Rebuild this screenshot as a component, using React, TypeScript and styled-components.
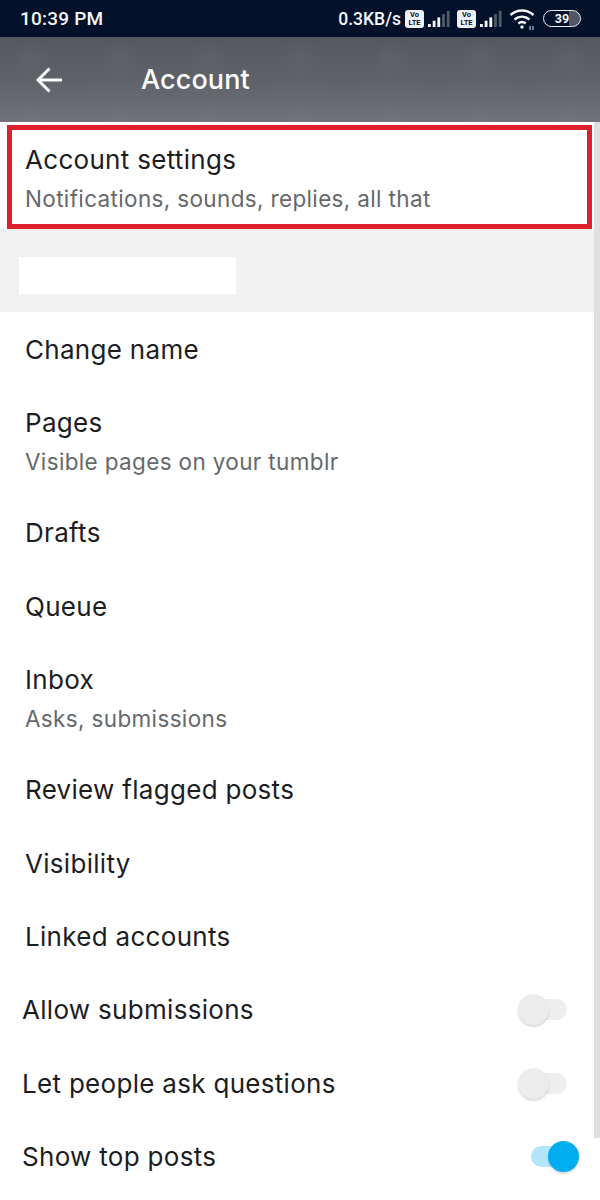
import React from "react";
import styled, { createGlobalStyle } from "styled-components";

const Global = createGlobalStyle`
  html, body { margin: 0; padding: 0; background: #fff; }
  body { font-family: Inter, "Liberation Sans", sans-serif; }
`;

const Page = styled.div`
  width: 600px;
  height: 1200px;
  overflow: hidden;
  position: relative;
  background: #fff;
`;

const StatusBar = styled.div`
  height: 37px;
  background: #03122a;
  color: #f4f6f8;
  display: flex;
  align-items: center;
  justify-content: space-between;
  padding: 0 19px 0 20px;
  font-family: Roboto, sans-serif;
  font-weight: 500;
`;

const Clock = styled.span`
  font-size: 19px;
  letter-spacing: 0.2px;
`;

const StatusRight = styled.div`
  display: flex;
  align-items: center;
`;

const Speed = styled.span`
  font-size: 17.5px;
  margin-right: 4px;
`;

const VolteBadge = styled.span`
  width: 19px;
  height: 18px;
  border-radius: 3px;
  background: #eef1f4;
  color: #03122a;
  font-size: 7.5px;
  line-height: 8px;
  font-weight: 700;
  text-align: center;
  display: flex;
  flex-direction: column;
  justify-content: center;
`;

const Header = styled.header`
  height: 85px;
  display: flex;
  align-items: center;
  color: #fff;
  background:
    radial-gradient(circle 20px at 30px 20px, rgba(255, 255, 255, 0.025), transparent),
    radial-gradient(circle 20px at 75px 48px, rgba(0, 0, 0, 0.02), transparent),
    linear-gradient(180deg, #55595f 0%, #5f6268 50%, #6f7379 100%);
  background-size: 90px 65px, 90px 65px, 100% 100%;
`;

const BackButton = styled.span`
  width: 26px;
  margin-left: 36px;
  display: flex;
`;

const Title = styled.h1`
  margin: 0 0 0 79px;
  font-size: 27px;
  font-weight: 500;
  letter-spacing: 0.1px;
`;

const Content = styled.div`
  padding-top: 3px;
`;

const Highlight = styled.section`
  margin: 0 8px 0 7px;
  height: 104px;
  box-sizing: border-box;
  border: 5px solid #de1f2c;
  padding: 12px 13px 0;
  background: #fff;
`;

const Label = styled.div`
  font-size: 26px;
  line-height: 36px;
  color: #1d1d1f;
  letter-spacing: 0.3px;
`;

const Sublabel = styled.div`
  font-size: 22.5px;
  line-height: 34px;
  margin-top: 4px;
  color: #66686b;
  letter-spacing: 0.35px;
`;

const SectionHead = styled.div`
  height: 83px;
  margin-right: 6px;
  background: #f1f1f1;
  padding: 28px 0 0 19px;
  box-sizing: border-box;
`;

const Redaction = styled.div`
  width: 217px;
  height: 37px;
  background: #fff;
`;

const Row = styled.div<{ $tall?: boolean; $inset?: number }>`
  height: ${(p) => (p.$tall ? 110 : 73.4)}px;
  box-sizing: border-box;
  padding: 20px 33px 0 ${(p) => p.$inset ?? 25}px;
  display: flex;
  justify-content: space-between;
  align-items: flex-start;
`;

const Track = styled.span<{ $on?: boolean }>`
  position: relative;
  display: block;
  width: 36px;
  height: 21px;
  margin-top: 7px;
  border-radius: 11px;
  background: ${(p) => (p.$on ? "#b3e6fb" : "#eeeeee")};
`;

const Knob = styled.span<{ $on?: boolean }>`
  position: absolute;
  top: -5px;
  ${(p) => (p.$on ? "right: -12px;" : "left: -13px;")}
  width: 31px;
  height: 31px;
  border-radius: 50%;
  background: ${(p) => (p.$on ? "#00aeef" : "#ececec")};
  box-shadow: 0 2px 2px rgba(0, 0, 0, 0.14);
`;

const Scrollbar = styled.div`
  position: absolute;
  right: 0;
  top: 122px;
  width: 6px;
  height: 1016px;
  background: #e0e0e0;
`;

const Signal = ({ gap }: { gap: number }) => (
  <svg width="24" height="20" viewBox="0 0 24 20" style={{ marginLeft: 3, marginRight: gap }}>
    {[0, 1, 2, 3, 4].map((i) => (
      <rect key={i} x={1 + i * 4.7} y={15 - i * 3.3} width="2.8" height={3 + i * 3.3} fill={i >= 3 ? "#4f5a6b" : "#f4f6f8"} />
    ))}
  </svg>
);

const Wifi = () => (
  <svg width="26" height="24" viewBox="0 0 26 24" fill="none" stroke="#f4f6f8" strokeWidth="2.4" style={{ marginRight: 8 }}>
    <path d="M1.500 8c6.800-6 16.200-6 23 0" />
    <path d="M5.500 12.500c4.400-3.800 10.600-3.800 15 0" />
    <path d="M9.300 16.500c2.200-1.700 5.200-1.700 7.400 0" />
    <circle cx="13" cy="20" r="1.7" fill="#f4f6f8" stroke="none" />
    <path d="M21 19v4M24 19v4" strokeWidth="1.300" stroke="#aab2bc" />
  </svg>
);

const BatteryShell = styled.span`
  position: relative;
  box-sizing: border-box;
  width: 38px;
  height: 17px;
  border: 1.5px solid #e9edf0;
  border-radius: 9px;
  display: flex;
  align-items: center;
  justify-content: center;
  font-size: 12.5px;
  font-weight: 700;
  background: linear-gradient(90deg, transparent 70%, #4e5868 70%);
`;

const items = [
  { label: "Change name" },
  { label: "Pages", sub: "Visible pages on your tumblr" },
  { label: "Drafts" },
  { label: "Queue" },
  { label: "Inbox", sub: "Asks, submissions" },
  { label: "Review flagged posts" },
  { label: "Visibility" },
  { label: "Linked accounts" },
];

const toggles = [
  { label: "Allow submissions", on: false },
  { label: "Let people ask questions", on: false },
  { label: "Show top posts", on: true },
];

export default function App() {
  return (
    <Page>
      <Global />
      <StatusBar>
        <Clock>10:39 PM</Clock>
        <StatusRight>
          <Speed>0.3KB/s</Speed>
          <VolteBadge><span>Vo</span><span>LTE</span></VolteBadge>
          <Signal gap={6} />
          <VolteBadge><span>Vo</span><span>LTE</span></VolteBadge>
          <Signal gap={6} />
          <Wifi />
          <BatteryShell>39</BatteryShell>
        </StatusRight>
      </StatusBar>
      <Header>
        <BackButton>
          <svg width="26" height="26" viewBox="0 0 26 26" fill="none" stroke="#fff" strokeWidth="3">
            <path d="M2 13H26" />
            <path d="M13.500 1.500 2 13l11.500 11.500" />
          </svg>
        </BackButton>
        <Title>Account</Title>
      </Header>
      <Content>
        <Highlight>
          <Label>Account settings</Label>
          <Sublabel>Notifications, sounds, replies, all that</Sublabel>
        </Highlight>
        <SectionHead>
          <Redaction />
        </SectionHead>
        {items.map((it) => (
          <Row key={it.label} $tall={!!it.sub}>
            <div>
              <Label>{it.label}</Label>
              {it.sub && <Sublabel>{it.sub}</Sublabel>}
            </div>
          </Row>
        ))}
        {toggles.map((t) => (
          <Row key={t.label} $inset={22}>
            <Label>{t.label}</Label>
            <Track $on={t.on}>
              <Knob $on={t.on} />
            </Track>
          </Row>
        ))}
      </Content>
      <Scrollbar />
    </Page>
  );
}
